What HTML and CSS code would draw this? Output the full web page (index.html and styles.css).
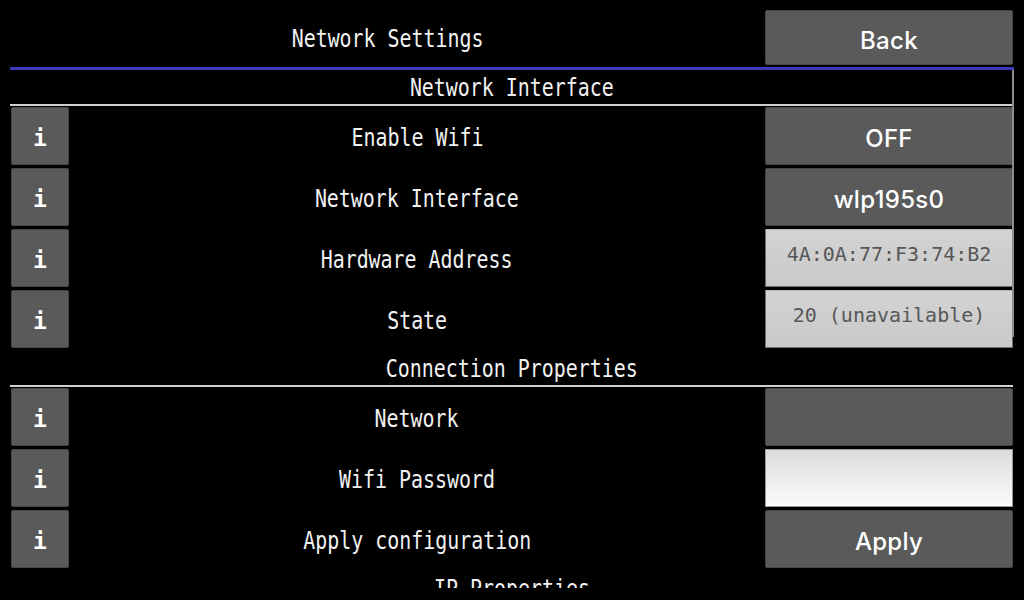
FILE: index.html
```html
<!DOCTYPE html>
<html lang="en">
<head>
    <meta charset="UTF-8">
    <meta name="viewport" content="width=device-width, initial-scale=1.0">
    <title>Network Settings</title>
    <link rel="stylesheet" href="styles.css">
</head>
<body>
<div class="page">
    <!-- Верхняя панель -->
    <div class="topbar">
        <div class="title"><span class="mono">Network Settings</span></div>
        <button class="btn back-btn">Back</button>
    </div>

    <!-- Прокручиваемый список настроек -->
    <div class="scroll-area">
        <div class="scroll-thumb"></div>

        <div class="section-title"><span class="mono">Network Interface</span></div>
        <div class="row">
            <button class="info-btn">i</button>
            <div class="label"><span class="mono">Enable Wifi</span></div>
            <button class="btn value">OFF</button>
        </div>
        <div class="row">
            <button class="info-btn">i</button>
            <div class="label"><span class="mono">Network Interface</span></div>
            <button class="btn value">wlp195s0</button>
        </div>
        <div class="row">
            <button class="info-btn">i</button>
            <div class="label"><span class="mono">Hardware Address</span></div>
            <div class="readonly">4A:0A:77:F3:74:B2</div>
        </div>
        <div class="row">
            <button class="info-btn">i</button>
            <div class="label"><span class="mono">State</span></div>
            <div class="readonly">20 (unavailable)</div>
        </div>

        <div class="section-title"><span class="mono">Connection Properties</span></div>
        <div class="row">
            <button class="info-btn">i</button>
            <div class="label"><span class="mono">Network</span></div>
            <button class="btn value"></button>
        </div>
        <div class="row">
            <button class="info-btn">i</button>
            <div class="label"><span class="mono">Wifi Password</span></div>
            <input class="text-input" type="password">
        </div>
        <div class="row">
            <button class="info-btn">i</button>
            <div class="label"><span class="mono">Apply configuration</span></div>
            <button class="btn value">Apply</button>
        </div>

        <div class="section-title"><span class="mono">IP Properties</span></div>
    </div>
</div>
</body>
</html>
```

FILE: styles.css
```css
body {
    margin: 0;
    padding: 0;
    background-color: black;
    color: #f2f2f2;
    height: 600px;
    overflow: hidden;
}

.page {
    padding: 10px 10px 0 10px;
}

/* Узкий моноширинный шрифт подписей */
.mono {
    display: inline-block;
    font-family: "DejaVu Sans Mono", monospace;
    font-size: 24px;
    transform: scaleX(0.83);
    white-space: nowrap;
}

/* Верхняя панель */
.topbar {
    display: flex;
    height: 57px;
}

.title {
    flex: 1;
    display: flex;
    align-items: center;
    justify-content: center;
    height: 55px;
    padding-top: 3px;
    box-sizing: border-box;
}

.btn {
    border: 1px solid #474747;
    border-radius: 2px;
    background-color: #5a5a5a;
    color: white;
    font-family: Inter, sans-serif;
    font-weight: 500;
    font-size: 24px;
    letter-spacing: 0.3px;
    padding: 0;
    margin: 0;
}

.back-btn {
    width: 248px;
    height: 55px;
    margin-right: 1px;
    padding-top: 5px;
}

/* Список настроек */
.scroll-area {
    position: relative;
    border-top: 3px solid #3b3bb5;
    height: 518px;
    overflow: hidden;
}

.scroll-thumb {
    position: absolute;
    top: 0;
    right: 0;
    width: 2px;
    height: 267px;
    background-color: #8c8c8c;
}

.section-title {
    box-sizing: border-box;
    height: 36px;
    padding-top: 2px;
    display: flex;
    align-items: center;
    justify-content: center;
    border-bottom: 2px solid #cfcfcf;
    margin-right: 1px;
    margin-bottom: 1px;
}

.row {
    display: flex;
    height: 58px;
    padding: 0 1px;
    margin-bottom: 3px;
}

.info-btn {
    width: 58px;
    height: 58px;
    margin: 0;
    padding: 4px 0 0 0;
    border: 1px solid #474747;
    border-radius: 2px;
    background-color: #5a5a5a;
    color: white;
    font-family: "DejaVu Sans Mono", monospace;
    font-weight: bold;
    font-size: 23px;
}

.label {
    flex: 1;
    display: flex;
    align-items: center;
    justify-content: center;
    padding-top: 4px;
}

.value {
    width: 248px;
    height: 58px;
    padding-top: 5px;
}

/* Поля только для чтения */
.readonly {
    box-sizing: border-box;
    width: 248px;
    height: 58px;
    border: 1px solid #6e6e6e;
    border-top-color: #b5b5b5;
    background: linear-gradient(#d3d3d3, #c9c9c9);
    color: #575757;
    font-family: "DejaVu Sans Mono", monospace;
    font-size: 20px;
    text-align: center;
    padding-top: 10px;
    line-height: 28px;
}

.text-input {
    box-sizing: border-box;
    width: 248px;
    height: 58px;
    margin: 0;
    border: 1px solid #9a9a9a;
    background: linear-gradient(#dcdcdc, #fbfbfb);
    outline: none;
}
```
